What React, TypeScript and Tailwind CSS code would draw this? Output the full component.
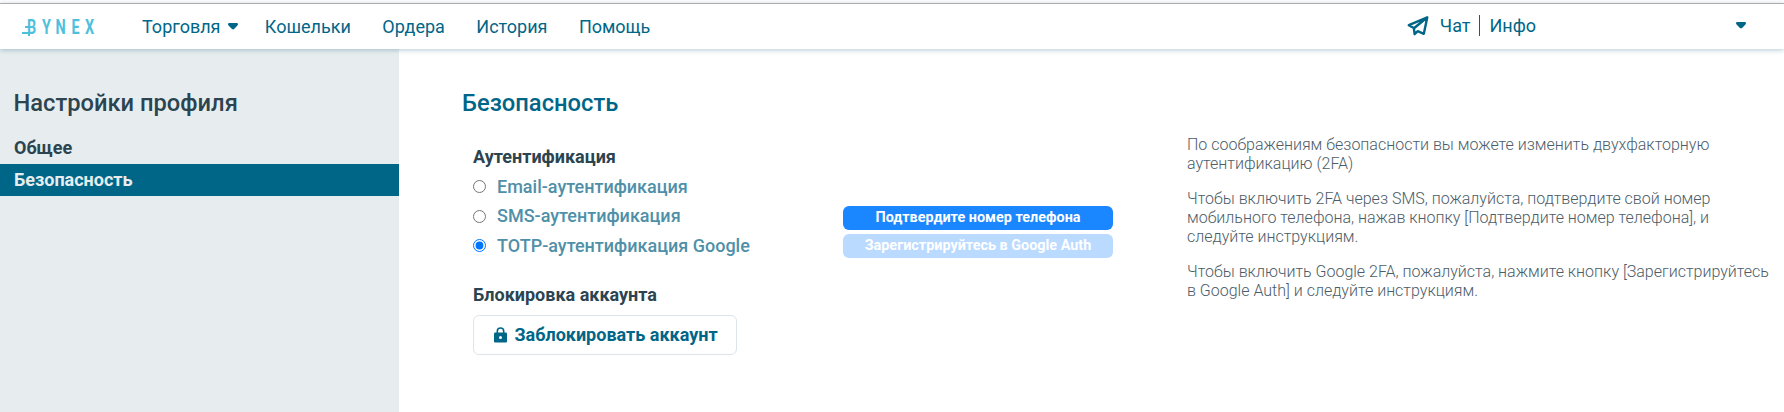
import { useState } from "react";

interface AuthMethod {
  id: string;
  label: string;
}

const navItems = ["Торговля", "Кошельки", "Ордера", "История", "Помощь"];

const authMethods: AuthMethod[] = [
  { id: "email", label: "Email-аутентификация" },
  { id: "sms", label: "SMS-аутентификация" },
  { id: "totp", label: "TOTP-аутентификация Google" }
];

function Caret() {
  return (
    <svg width="10" height="7" viewBox="0 0 10 7" fill="#006688">
      <path d="M1.2 0h7.6Q10 0 10 1.3 9.8 2.2 9 3L6 6.1Q5 7 4 6.1L1 3Q.2 2.2 0 1.3 0 0 1.2 0Z" />
    </svg>
  );
}

function Logo() {
  return (
    <div className="relative flex h-4 w-[72px] items-center justify-between pl-[5px] text-[20px] leading-4 font-bold text-[#4fc0dc]">
      {"BYNEX".split("").map(letter => (
        <span key={letter} className="flex w-[9px] scale-x-[.72] justify-center">
          {letter}
        </span>
      ))}
      {/* strokes that turn the B into a coin sign */}
      <span className="absolute bottom-[1px] left-0 h-[2px] w-[7px] bg-[#4fc0dc]" />
      <span className="absolute top-[7px] left-[3px] h-[2px] w-[5px] bg-[#4fc0dc]" />
      <span className="absolute -bottom-px left-[6px] h-[2px] w-[2px] bg-[#4fc0dc]" />
    </div>
  );
}

function Navbar() {
  return (
    <header className="relative z-10 flex h-[46px] items-start border-t border-t-[#adadad] bg-white pt-[9px] text-lg leading-[27px] text-[#006688] shadow-[0_1px_5px_rgba(0,80,110,0.3)]">
      <div className="mt-[6px] ml-[22px]">
        <Logo />
      </div>
      <ul className="ml-12 flex gap-[31.4px]">
        {navItems.map((item, i) => (
          <li key={item} className="flex items-center">
            {item}
            {i === 0 && (
              <span className="-mr-[5px] ml-[8px]">
                <Caret />
              </span>
            )}
          </li>
        ))}
      </ul>
      <div className="mr-[248px] ml-auto -mt-px flex items-center">
        <svg width="22" height="20" viewBox="0 0 22 20" fill="none" stroke="#006688" strokeWidth="2.4" strokeLinejoin="round">
          <path d="M20.3 1.3 1.8 9.2 6.8 12 7.6 18.2 10.8 15.2 16.8 17.8 20.3 1.3 7.3 12" />
        </svg>
        <span className="ml-[11px]">Чат</span>
        <span className="mx-[9px] h-[21px] w-px bg-[#006688]" />
        <span>Инфо</span>
      </div>
      <div className="mr-[38px] -ml-[48px] flex h-[25px] items-center">
        <Caret />
      </div>
    </header>
  );
}

function Sidebar() {
  return (
    <aside className="w-[399px] bg-[#e7edef] pt-9 text-[#2b4450]">
      <h2 className="pl-[13.5px] text-[23.7px] leading-9 font-medium">Настройки профиля</h2>
      <ul className="mt-[11px] text-lg leading-8 font-bold">
        <li className="pl-[14px]">Общее</li>
        <li className="bg-[#006688] pl-[14px] text-[#e7edef]">Безопасность</li>
      </ul>
    </aside>
  );
}

function LockIcon() {
  return (
    <svg width="13" height="16" viewBox="0 0 13 16">
      <path d="M3.3 7V4.2a3.2 3.2 0 0 1 6.4 0V7" fill="none" stroke="#006688" strokeWidth="1.6" />
      <rect y="5.5" width="13" height="10" rx="1.3" fill="#006688" />
      <circle cx="6.5" cy="10.5" r="1.5" fill="#fff" />
    </svg>
  );
}

export default function App() {
  const [method, setMethod] = useState("totp");

  return (
    <div className="h-[412px] overflow-hidden bg-white pt-[3px] font-['Roboto',sans-serif]">
      <Navbar />
      <div className="flex h-[363px]">
        <Sidebar />
        <main className="ml-[63px] pt-9">
          <h1 className="text-[23.75px] leading-9 font-medium text-[#006688]">Безопасность</h1>
          <div className="flex">
            <section className="ml-[11px] w-[370px] pt-[22px] text-lg font-medium text-[#2b4450]">
              <h3 className="mb-[2px] leading-[27px] font-bold">Аутентификация</h3>
              {authMethods.map(({ id, label }) => (
                <label key={id} className="flex h-[29.5px] items-center text-[#4f90a8]">
                  <input
                    type="radio"
                    name="auth"
                    checked={method === id}
                    onChange={() => setMethod(id)}
                    className="mr-[11px] size-[13px]"
                  />
                  {label}
                </label>
              ))}
              <h3 className="mt-5 leading-[27px] font-bold">Блокировка аккаунта</h3>
              <button className="mt-[7px] flex h-10 w-[264px] items-center justify-center gap-[7px] rounded-md border border-[#dde5e8] pl-[2px] font-bold text-[#006688]">
                <LockIcon />
                Заблокировать аккаунт
              </button>
            </section>
            <div className="flex w-[270px] flex-col gap-1 pt-[85px] text-[14.4px] font-bold text-white">
              <button className="h-6 rounded-md bg-[#1a86ff] leading-6">Подтвердите номер телефона</button>
              <button className="h-6 rounded-md bg-[#badaff] leading-6">Зарегистрируйтесь в Google Auth</button>
            </div>
            <div className="ml-[74px] flex w-[590px] flex-col gap-4 pt-[14px] text-base leading-[19px] font-light text-[#4c5d68]">
              <p>
                По соображениям безопасности вы можете изменить двухфакторную
                <br />
                аутентификацию (2FA)
              </p>
              <p>
                Чтобы включить 2FA через SMS, пожалуйста, подтвердите свой номер
                <br />
                мобильного телефона, нажав кнопку [Подтвердите номер телефона], и
                <br />
                следуйте инструкциям.
              </p>
              <p>
                Чтобы включить Google 2FA, пожалуйста, нажмите кнопку [Зарегистрируйтесь
                <br />в Google Auth] и следуйте инструкциям.
              </p>
            </div>
          </div>
        </main>
      </div>
    </div>
  );
}
